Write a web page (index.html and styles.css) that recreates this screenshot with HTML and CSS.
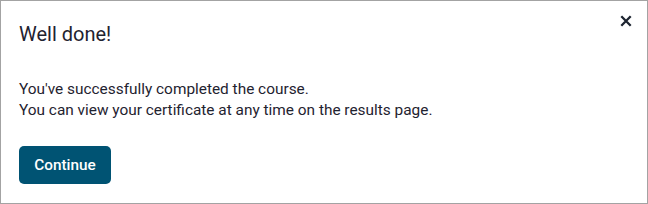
FILE: index.html
```html
<!DOCTYPE html>
<html>
<head>
<meta charset="utf-8">
<link rel="stylesheet" href="styles.css">
</head>
<body>
<div class="dialog">
  <div class="header">
    <h2 class="title">Well done!</h2>
    <button class="close" aria-label="Close">
      <svg width="12" height="12" viewBox="0 0 12 12"><path d="M1.3 1.3 L10.7 10.7 M10.7 1.3 L1.3 10.7" stroke="#1d2430" stroke-width="2.3" stroke-linecap="butt"/></svg>
    </button>
  </div>
  <div class="body">
    <p class="line">You've successfully completed the course.</p>
    <p class="line">You can view your certificate at any time on the results page.</p>
  </div>
  <div class="footer">
    <button class="btn">Continue</button>
  </div>
</div>
</body>
</html>
```
FILE: styles.css
```css
html, body { margin: 0; padding: 0; background: #fff; }
body { font-family: Roboto, "Liberation Sans", sans-serif; color: #1f2330; }
.dialog {
  width: 648px; height: 204px; box-sizing: border-box;
  border: 1px solid #a3a3a3;
  padding: 0 18px;
  display: flex; flex-direction: column;
}
.header { display: flex; justify-content: space-between; align-items: flex-start; height: 78px; }
.title { margin: 22px 0 0; font-size: 20px; font-weight: 400; line-height: 22px; }
.close { margin: 13px -5px 0 0; background: none; border: 0; padding: 0; width: 16px; height: 14px; display: flex; align-items: center; justify-content: center; }
.body { font-size: 15.4px; line-height: 21px; }
.line { margin: 0; }
.footer { margin-top: 25px; }
.btn {
  background: #005373; color: #fff; border: 0; border-radius: 5px;
  font-family: Roboto, "Liberation Sans", sans-serif; font-weight: 500; font-size: 15.3px;
  width: 92px; height: 38px; padding: 0;
}
```
